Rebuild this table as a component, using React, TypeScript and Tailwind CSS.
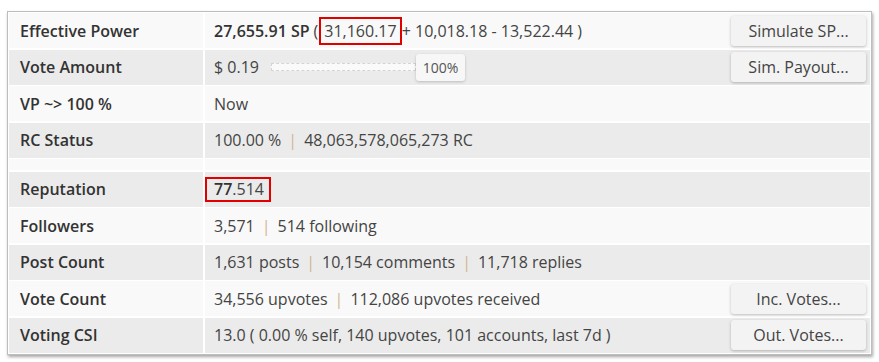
import React from 'react';

const font = { fontFamily: '"Open Sans", "Liberation Sans", sans-serif' };

function Sep() {
    return <span className="mx-[7px] text-[#d2b590]">|</span>;
}

function Btn({ children }: { children: React.ReactNode }) {
    return (
        <button className="ml-auto mr-[4px] h-[30px] w-[135px] rounded-[3px] bg-[#f3f3f3] text-[16px] text-[#444] shadow-[0_1px_3px_rgba(0,0,0,0.25)]">
            {children}
        </button>
    );
}

function Row({
    label,
    gray,
    children,
}: {
    label: string;
    gray?: boolean;
    children: React.ReactNode;
}) {
    const bg = gray ? 'bg-[#ebebeb]' : 'bg-[#f9f9f9]';
    return (
        <>
            <div className={`${bg} flex h-[35px] items-center pl-[11px] font-semibold text-[#333]`}>
                {label}
            </div>
            <div className={`${bg} flex h-[35px] items-center pl-[9px] text-[#444]`}>
                {children}
            </div>
        </>
    );
}

export default function App() {
    return (
        <div className="h-[362px] w-[879px] bg-white pl-[7px] pt-[11px]" style={font}>
            <div className="w-[865px] border border-[#bdbdbd] bg-white p-px text-[16px] shadow-[1px_2px_3px_rgba(0,0,0,0.35)]">
                <div className="grid grid-cols-[194px_1fr] gap-x-[2px] gap-y-[1.5px]">
                    <Row label="Effective Power">
                        <span className="font-semibold text-[#333]">27,655.91 SP</span>
                        <span className="ml-[4px]">(</span>
                        <span className="ml-[1px] border-2 border-[#e00000] px-[3px] leading-[24px]">
                            31,160.17
                        </span>
                        <span>+ 10,018.18 - 13,522.44 )</span>
                        <Btn>Simulate SP...</Btn>
                    </Row>
                    <Row label="Vote Amount" gray>
                        <span>$ 0.19</span>
                        <div className="ml-[12px] h-[8px] w-[145px] border border-dashed border-[#d4d4d4] bg-[#fafafa]" />
                        <div className="flex h-[27px] w-[49px] items-center justify-center rounded-[3px] bg-[#f7f7f7] text-[14px] text-[#555] shadow-[0_1px_3px_rgba(0,0,0,0.2)]">
                            100%
                        </div>
                        <Btn>Sim. Payout...</Btn>
                    </Row>
                    <Row label="VP ~> 100 %">
                        <span>Now</span>
                    </Row>
                    <Row label="RC Status" gray>
                        <span>100.00 %</span>
                        <Sep />
                        <span>48,063,578,065,273 RC</span>
                    </Row>
                    <div className="h-[11px] bg-[#f9f9f9]" />
                    <div className="h-[11px] bg-[#f9f9f9]" />
                    <Row label="Reputation" gray>
                        <span className="ml-[-9px] border-2 border-[#e00000] pl-[7px] pr-[5px] leading-[21px]">
                            <span className="font-semibold text-[#333]">77</span>.514
                        </span>
                    </Row>
                    <Row label="Followers">
                        <span>3,571</span>
                        <Sep />
                        <span>514 following</span>
                    </Row>
                    <Row label="Post Count" gray>
                        <span>1,631 posts</span>
                        <Sep />
                        <span>10,154 comments</span>
                        <Sep />
                        <span>11,718 replies</span>
                    </Row>
                    <Row label="Vote Count">
                        <span>34,556 upvotes</span>
                        <Sep />
                        <span>112,086 upvotes received</span>
                        <Btn>Inc. Votes...</Btn>
                    </Row>
                    <Row label="Voting CSI" gray>
                        <span>13.0 ( 0.00 % self, 140 upvotes, 101 accounts, last 7d )</span>
                        <Btn>Out. Votes...</Btn>
                    </Row>
                </div>
            </div>
        </div>
    );
}
